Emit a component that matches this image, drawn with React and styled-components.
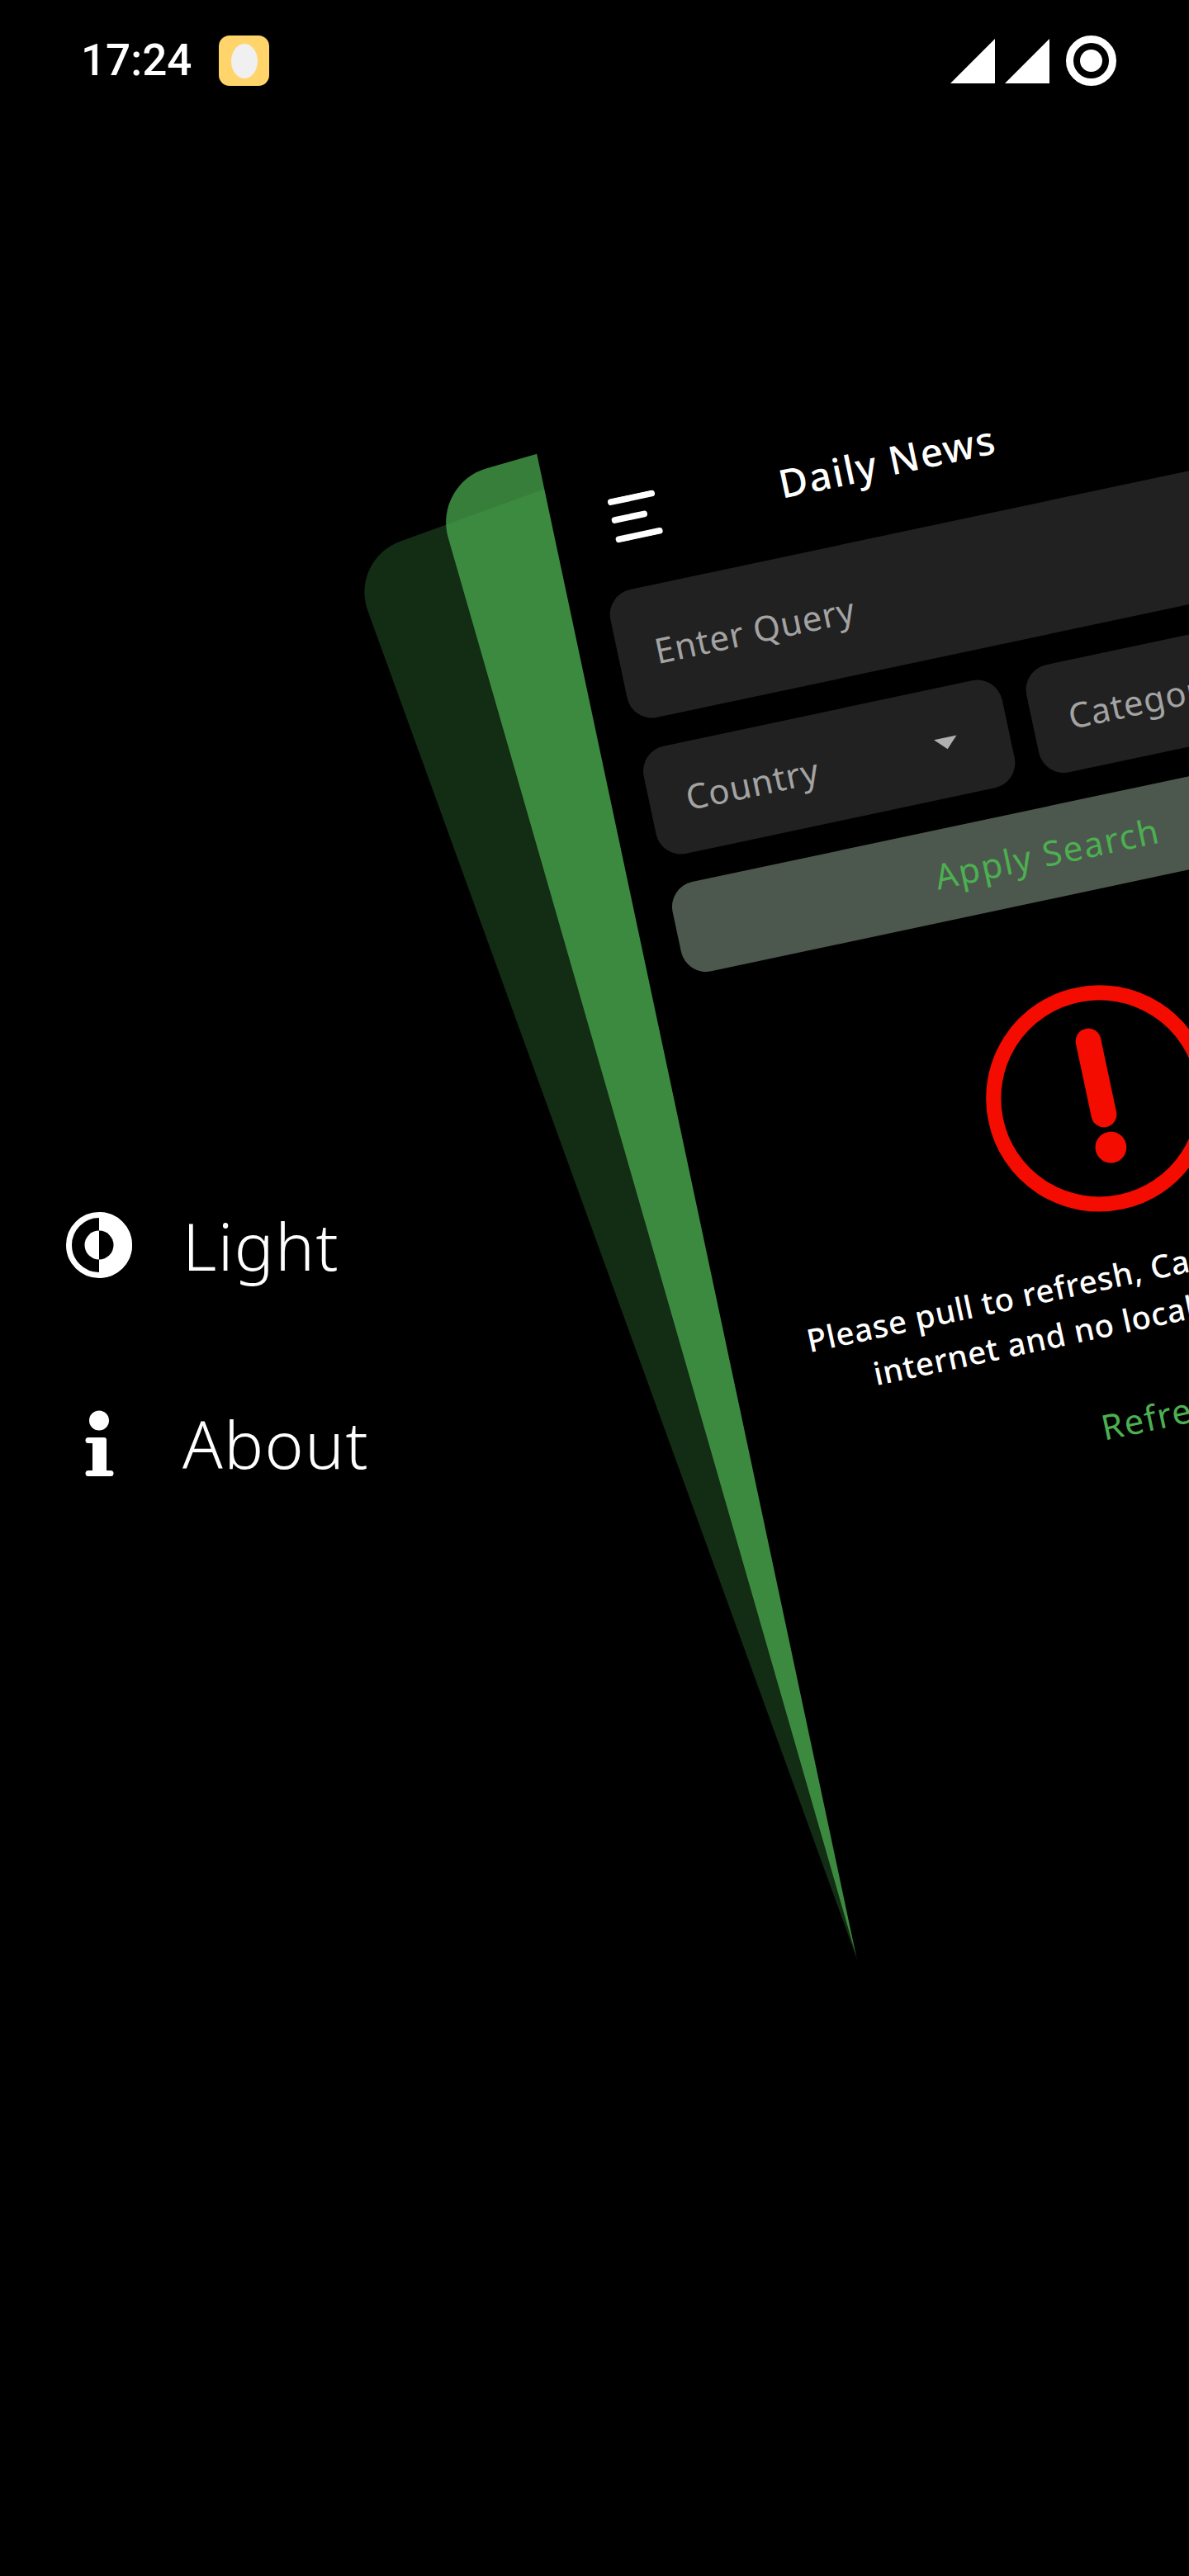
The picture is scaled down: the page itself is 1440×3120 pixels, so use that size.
// App.jsx
import React from 'react';
import styled, { createGlobalStyle } from 'styled-components';

const GREEN = '#4caf50';
const FONT = '"Noto Sans", "Open Sans", sans-serif';

const GlobalStyle = createGlobalStyle`
  html, body {
    margin: 0;
    padding: 0;
    background: #000;
  }
  * {
    box-sizing: border-box;
  }
`;

const Screen = styled.div`
  position: relative;
  width: 1440px;
  height: 3120px;
  overflow: hidden;
  background: #000;
  color: #fff;
  font-family: ${FONT};
`;

const StatusBar = styled.header`
  display: flex;
  align-items: center;
  justify-content: space-between;
  height: 61px;
  margin-top: 43px;
  padding: 0 88px 0 98px;
`;

const StatusLeft = styled.div`
  display: flex;
  align-items: center;
  gap: 33px;
`;

const Clock = styled.span`
  font-family: Roboto, sans-serif;
  font-size: 53px;
  font-weight: 500;
  line-height: 61px;
`;

const AppBadge = styled.span`
  display: flex;
  align-items: center;
  justify-content: center;
  width: 61px;
  height: 61px;
  border-radius: 13px;
  background: #ffd56b;

  &::after {
    content: '';
    width: 32px;
    height: 42px;
    border-radius: 50%;
    background: #f0f0f0;
  }
`;

const StatusRight = styled.div`
  display: flex;
  align-items: center;
  gap: 20px;
`;

const Menu = styled.nav`
  display: flex;
  flex-direction: column;
  gap: 160px;
  margin-top: 1364px;
  padding-left: 80px;
`;

const MenuItem = styled.div`
  display: flex;
  align-items: center;
  gap: 61px;
  height: 80px;
  font-size: 80px;
  font-weight: 300;
  letter-spacing: 1.5px;
  line-height: 80px;
`;

const Layer = styled.div`
  position: absolute;
  top: 0;
  left: 0;
  width: 520px;
  height: 3120px;
  border-radius: 100px;
  background: ${(p) => p.$color};
  transform: ${(p) => p.$transform};
  transform-origin: 0 0;
`;

const Page = styled.main`
  position: absolute;
  top: 0;
  left: 0;
  width: 1440px;
  height: 3120px;
  padding: 100px 65px 0;
  background: #000;
  transform: translate(646px, 530px) rotate(-12deg) scale(0.7);
  transform-origin: 0 0;
`;

const AppBar = styled.div`
  display: flex;
  align-items: center;
  height: 140px;
  padding-left: 37px;
`;

const Title = styled.h1`
  margin: 0 0 6px 213px;
  font-size: 68px;
  font-weight: 500;
  letter-spacing: 2.5px;
  line-height: 80px;
`;

const Field = styled.div`
  position: relative;
  display: flex;
  align-items: center;
  flex: 1;
  height: ${(p) => p.$height}px;
  padding-left: 64px;
  border-radius: 44px;
  background: #212121;
  color: #a3a3a3;
  font-size: 60px;
  letter-spacing: 1.2px;
`;

const SearchWrap = styled.div`
  margin-top: 52px;
`;

const FilterRow = styled.div`
  display: flex;
  gap: 43px;
  margin-top: 51px;
`;

const Caret = styled.span`
  position: absolute;
  top: 87px;
  left: 504px;
  width: 0;
  height: 0;
  border-left: 20px solid transparent;
  border-right: 20px solid transparent;
  border-top: 20px solid #b0b0b0;
`;

const ApplyButton = styled.div`
  display: flex;
  align-items: center;
  justify-content: center;
  height: 158px;
  margin-top: 50px;
  border-radius: 44px;
  background: #4c584e;
  color: ${GREEN};
  font-size: 60px;
  letter-spacing: 2.7px;
`;

const ErrorBlock = styled.section`
  display: flex;
  flex-direction: column;
  align-items: center;
  margin-top: 159px;
`;

const Message = styled.p`
  margin: 69px 0 0;
  font-size: 55px;
  font-weight: 500;
  letter-spacing: 1px;
  line-height: 80px;
  text-align: center;
  white-space: nowrap;
`;

const RefreshLink = styled.span`
  margin-top: 93px;
  color: ${GREEN};
  font-size: 60px;
  letter-spacing: 2px;
  line-height: 80px;
`;

function MenuLines() {
  return (
    <svg width="84" height="78" viewBox="0 0 84 78" fill="none" stroke="#fff" strokeWidth="11" strokeLinecap="round">
      <path d="M6 6H78M6 38H58M6 72H78" />
    </svg>
  );
}

function ThemeIcon() {
  return (
    <svg width="80" height="80" viewBox="0 0 80 80">
      <circle cx="40" cy="40" r="36.5" fill="none" stroke="#fff" strokeWidth="7" />
      <path d="M40 0a40 40 0 0 1 0 80z" fill="#fff" />
      <path d="M40 22.5a17.5 17.5 0 0 0 0 35z" fill="#fff" />
      <path d="M40 22.5a17.5 17.5 0 0 1 0 35z" fill="#000" />
    </svg>
  );
}

function InfoIcon() {
  return (
    <svg width="80" height="80" viewBox="0 0 80 80" fill="#fff">
      <circle cx="40" cy="12.5" r="12" />
      <path d="M27 33h19a3 3 0 0 1 3 3v37h5a3.500 3.500 0 0 1 0 7H27a3.500 3.500 0 0 1 0-7h5V40h-5a3.500 3.500 0 0 1 0-7z" />
    </svg>
  );
}

function ErrorIcon() {
  return (
    <svg width="392" height="392" viewBox="0 0 392 392">
      <circle cx="196" cy="196" r="183" fill="none" stroke="#f40c00" strokeWidth="26" />
      <path d="M198 95V225" fill="none" stroke="#f40c00" strokeWidth="44" strokeLinecap="round" />
      <circle cx="198" cy="283" r="27" fill="#f40c00" />
    </svg>
  );
}

function App() {
  return (
    <Screen>
      <GlobalStyle />
      <StatusBar>
        <StatusLeft>
          <Clock>17:24</Clock>
          <AppBadge />
        </StatusLeft>
        <StatusRight>
          <svg width="120" height="54" viewBox="0 0 120 54" fill="#fff">
            <path d="M54 0V54H0zM120 0V54H66z" />
          </svg>
          <svg width="61" height="61" viewBox="0 0 61 61">
            <circle cx="30.500" cy="30.500" r="26" fill="none" stroke="#fff" strokeWidth="9" />
            <circle cx="30.500" cy="30.500" r="13.500" fill="#fff" />
          </svg>
        </StatusRight>
      </StatusBar>

      <Menu>
        <MenuItem>
          <ThemeIcon />
          <span>Light</span>
        </MenuItem>
        <MenuItem>
          <InfoIcon />
          <span>About</span>
        </MenuItem>
      </Menu>

      <Layer $color="rgba(76, 175, 80, 0.25)" $transform="translate(423px, 678px) rotate(-19.94deg) scale(0.655)" />
      <Layer $color="rgba(76, 175, 80, 0.72)" $transform="translate(524px, 586px) rotate(-16.05deg) scale(0.68)" />

      <Page>
        <AppBar>
          <MenuLines />
          <Title>Daily News</Title>
        </AppBar>
        <SearchWrap>
          <Field $height={226}>Enter Query</Field>
        </SearchWrap>
        <FilterRow>
          <Field $height={190}>
            Country
            <Caret />
          </Field>
          <Field $height={190}>
            Category
            <Caret />
          </Field>
        </FilterRow>
        <ApplyButton>Apply Search</ApplyButton>
        <ErrorBlock>
          <ErrorIcon />
          <Message>
            Please pull to refresh, Can't find any stable
            <br />
            internet and no local data available
          </Message>
          <RefreshLink>Refresh</RefreshLink>
        </ErrorBlock>
      </Page>
    </Screen>
  );
}

export default App;
